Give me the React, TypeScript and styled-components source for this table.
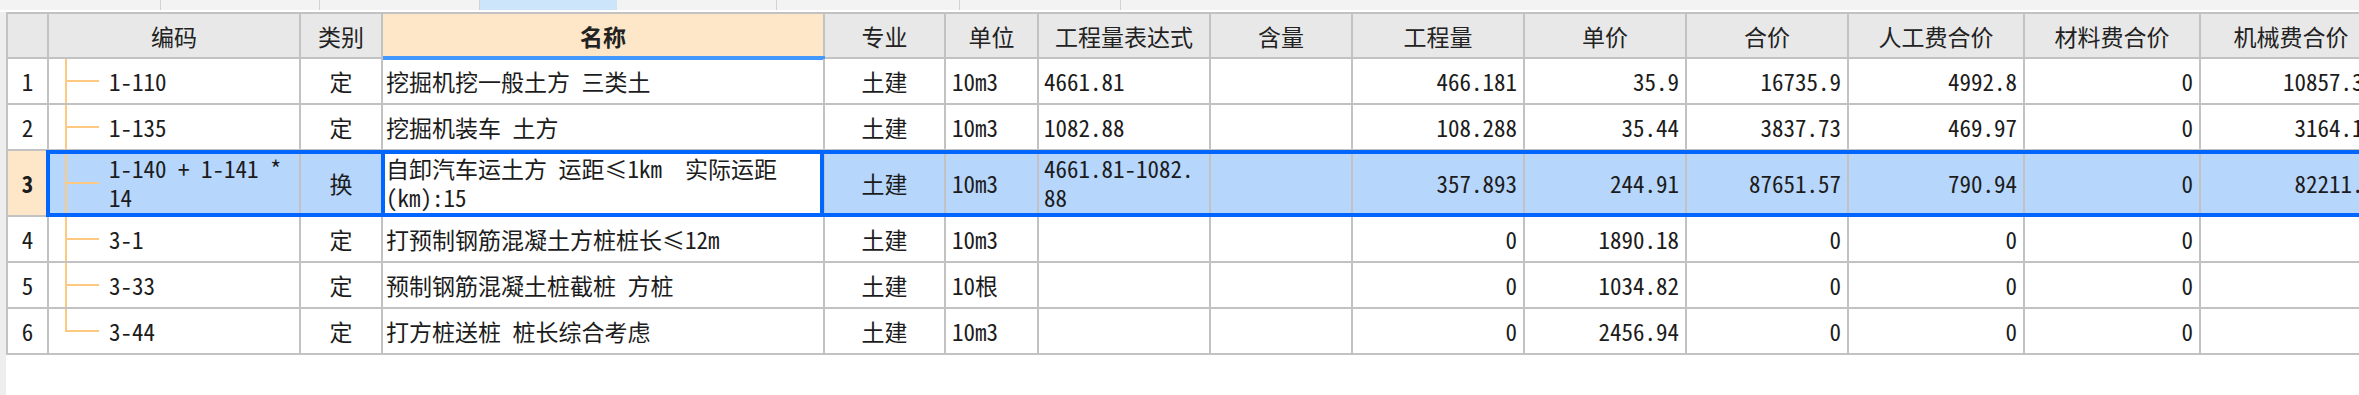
import React from 'react';
import styled, { createGlobalStyle, css } from 'styled-components';

const GRID = '#c2c2c2';
const BLUE = '#0066ff';
const TREE = '#fdc981';
const PEACH = '#fde7c8';
const SELECTED = '#b6d6fc';

// column widths (right border included), after the row number column
const COLS = [252, 82, 442, 121, 93, 172, 142, 172, 162, 162, 176, 176, 182];

const GlobalStyle = createGlobalStyle`
  html, body {
    margin: 0;
    padding: 0;
    background: #fff;
    overflow: hidden;
  }
  body {
    font-family: "Noto Sans CJK SC", "Liberation Sans", sans-serif;
    color: #1c1c1c;
  }
  * {
    box-sizing: border-box;
  }
`;

const Page = styled.div`
  width: 2359px;
  height: 395px;
  overflow: hidden;
  display: flex;
  flex-direction: column;
`;

const TabStrip = styled.div`
  display: flex;
  height: 10px;
  flex-shrink: 0;
  background: #f3f3f3;
`;

const Tab = styled.div<{ $w: number; $active?: boolean }>`
  width: ${p => p.$w}px;
  height: 100%;
  border-right: 1px solid ${p => (p.$active ? '#cce5fb' : '#d2d2d2')};
  background: ${p => (p.$active ? '#cce5fb' : 'transparent')};
`;

const Body = styled.div`
  display: flex;
  flex: 1;
  margin-top: 2px;
  min-height: 0;
`;

const LeftRail = styled.div`
  width: 6px;
  flex-shrink: 0;
  background: #eeeeee;
`;

const Sheet = styled.div`
  display: flex;
  flex-direction: column;
  align-self: flex-start;
  flex-shrink: 0;
  border-top: 2px solid ${GRID};
  border-left: 2px solid ${GRID};
  font-size: 23px;
  font-feature-settings: "hwid";
`;

const Row = styled.div<{ $h: number }>`
  display: flex;
  height: ${p => p.$h}px;
  border-bottom: 2px solid ${GRID};
  flex-shrink: 0;
`;

const RowNum = styled.div<{ $head?: boolean; $current?: boolean }>`
  width: 41px;
  flex-shrink: 0;
  display: flex;
  align-items: center;
  justify-content: center;
  border-right: 2px solid ${GRID};
  background: ${p => (p.$head ? '#e8e8e8' : p.$current ? PEACH : '#fff')};
  font-weight: ${p => (p.$current ? 700 : 400)};
`;

const Band = styled.div<{ $selected?: boolean }>`
  display: grid;
  grid-template-columns: ${COLS.map(w => `${w}px`).join(' ')};
  flex-shrink: 0;
  position: relative;
  background: ${p => (p.$selected ? SELECTED : 'transparent')};

  ${p =>
    p.$selected &&
    css`
      &::after {
        content: '';
        position: absolute;
        top: -1px;
        bottom: -2px;
        left: -3px;
        right: 0;
        border: 4px solid ${BLUE};
        border-right: none;
        pointer-events: none;
      }
    `}
`;

const HeadCell = styled.div<{ $key?: boolean }>`
  display: flex;
  align-items: center;
  justify-content: center;
  border-right: 2px solid ${GRID};
  background: ${p => (p.$key ? PEACH : '#e8e8e8')};
  font-weight: ${p => (p.$key ? 700 : 400)};
  color: #222;
  white-space: nowrap;
  position: relative;

  ${p =>
    p.$key &&
    css`
      &::after {
        content: '';
        position: absolute;
        left: 0;
        right: -2px;
        bottom: -3px;
        height: 4px;
        background: #4499ff;
      }
    `}
`;

const Cell = styled.div<{ $align?: 'left' | 'center' | 'right'; $pad?: number; $active?: boolean }>`
  display: flex;
  align-items: center;
  justify-content: ${p =>
    p.$align === 'right' ? 'flex-end' : p.$align === 'center' ? 'center' : 'flex-start'};
  padding: 0 ${p => (p.$align === 'right' ? 6 : 0)}px 0 ${p => p.$pad ?? 5}px;
  border-right: 2px solid ${GRID};
  white-space: pre;
  line-height: 29px;
  position: relative;
  background: ${p => (p.$active ? '#fff' : 'transparent')};
  overflow: ${p => (p.$active ? 'visible' : 'hidden')};

  ${p =>
    p.$active &&
    css`
      &::after {
        content: '';
        position: absolute;
        top: -1px;
        bottom: -2px;
        left: -2px;
        right: -1px;
        border-left: 4px solid ${BLUE};
        border-right: 4px solid ${BLUE};
        pointer-events: none;
      }
    `}
`;

const CodeCell = styled.div`
  display: flex;
  align-items: stretch;
  padding-left: 16px;
  border-right: 2px solid ${GRID};
  white-space: pre;
  line-height: 29px;
  overflow: hidden;
`;

const Guide = styled.div<{ $last?: boolean }>`
  width: 34px;
  flex-shrink: 0;
  background:
    linear-gradient(${TREE}, ${TREE}) left top / 2px ${p => (p.$last ? '50%' : '100%')} no-repeat,
    linear-gradient(${TREE}, ${TREE}) left center / 100% 2px no-repeat;
`;

const CodeText = styled.div`
  margin-left: 10px;
  align-self: center;
`;

type Text = string | string[];

interface Item {
  code: Text;
  kind: string;
  name: Text;
  major: string;
  unit: string;
  expr: Text;
  content: string;
  qty: string;
  price: string;
  total: string;
  labor: string;
  material: string;
  machine: string;
}

const items: Item[] = [
  {
    code: '1-110', kind: '定', name: '挖掘机挖一般土方 三类土', major: '土建', unit: '10m3',
    expr: '4661.81', content: '', qty: '466.181', price: '35.9', total: '16735.9',
    labor: '4992.8', material: '0', machine: '10857.31',
  },
  {
    code: '1-135', kind: '定', name: '挖掘机装车 土方', major: '土建', unit: '10m3',
    expr: '1082.88', content: '', qty: '108.288', price: '35.44', total: '3837.73',
    labor: '469.97', material: '0', machine: '3164.16',
  },
  {
    code: ['1-140 + 1-141 *', '14'], kind: '换', name: ['自卸汽车运土方 运距≤1km  实际运距', '(km):15'],
    major: '土建', unit: '10m3', expr: ['4661.81-1082.', '88'], content: '', qty: '357.893',
    price: '244.91', total: '87651.57', labor: '790.94', material: '0', machine: '82211.7',
  },
  {
    code: '3-1', kind: '定', name: '打预制钢筋混凝土方桩桩长≤12m', major: '土建', unit: '10m3',
    expr: '', content: '', qty: '0', price: '1890.18', total: '0', labor: '0', material: '0', machine: '',
  },
  {
    code: '3-33', kind: '定', name: '预制钢筋混凝土桩截桩 方桩', major: '土建', unit: '10根',
    expr: '', content: '', qty: '0', price: '1034.82', total: '0', labor: '0', material: '0', machine: '',
  },
  {
    code: '3-44', kind: '定', name: '打方桩送桩 桩长综合考虑', major: '土建', unit: '10m3',
    expr: '', content: '', qty: '0', price: '2456.94', total: '0', labor: '0', material: '0', machine: '',
  },
];

const headers = [
  '编码', '类别', '名称', '专业', '单位', '工程量表达式', '含量',
  '工程量', '单价', '合价', '人工费合价', '材料费合价', '机械费合价',
];

const tabs = [161, 159, 160, 137, 160, 183, 161];

const SELECTED_INDEX = 2;

// wrapped cells keep their line breaks as one text block
const renderText = (t: Text) => (Array.isArray(t) ? t.join('\n') : t);

const App: React.FC = () => {
  return (
    <>
      <GlobalStyle />
      <Page>
        <TabStrip>
          {tabs.map((w, i) => (
            <Tab key={i} $w={w} $active={i === 3} />
          ))}
        </TabStrip>
        <Body>
          <LeftRail />
          <Sheet>
            <Row $h={45}>
              <RowNum $head />
              <Band>
                {headers.map(h => (
                  <HeadCell key={h} $key={h === '名称'}>
                    {h}
                  </HeadCell>
                ))}
              </Band>
            </Row>
            {items.map((item, i) => {
              const selected = i === SELECTED_INDEX;
              return (
                <Row key={i} $h={selected ? 66 : 46}>
                  <RowNum $current={selected}>{i + 1}</RowNum>
                  <Band $selected={selected}>
                    <CodeCell>
                      <Guide $last={i === items.length - 1} />
                      <CodeText>{renderText(item.code)}</CodeText>
                    </CodeCell>
                    <Cell $align="center" $pad={0}>{item.kind}</Cell>
                    <Cell $pad={3} $active={selected}>{renderText(item.name)}</Cell>
                    <Cell $align="center" $pad={0}>{item.major}</Cell>
                    <Cell $pad={6}>{item.unit}</Cell>
                    <Cell $pad={5}>{renderText(item.expr)}</Cell>
                    <Cell $align="right">{item.content}</Cell>
                    <Cell $align="right">{item.qty}</Cell>
                    <Cell $align="right">{item.price}</Cell>
                    <Cell $align="right">{item.total}</Cell>
                    <Cell $align="right">{item.labor}</Cell>
                    <Cell $align="right">{item.material}</Cell>
                    <Cell $align="right">{item.machine}</Cell>
                  </Band>
                </Row>
              );
            })}
          </Sheet>
        </Body>
      </Page>
    </>
  );
};

export default App;
